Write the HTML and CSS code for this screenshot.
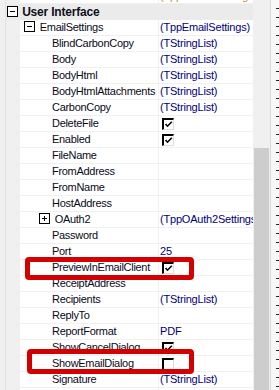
FILE: index.html
```html
<!DOCTYPE html>
<html>
<head>
    <meta charset="utf-8" />
    <title>Object Inspector</title>
    <link rel="stylesheet" href="styles.css">
</head>
<body class="body">
    <div class="inspector">
        <div class="side"></div>
        <div class="list">
            <div class="row top">
                <div class="indent"></div>
                <div class="name"></div>
                <div class="value"><span class="cut">(TppOutlineSettings)</span></div>
            </div>
            <div class="category">
                <svg class="tog" width="11" height="11" viewBox="0 0 11 11"><rect x="0.5" y="0.5" width="10" height="10" fill="#fff" stroke="#000"/><path d="M3 5.5h5" stroke="#000"/></svg>
                User Interface
            </div>
            <div class="row">
                <div class="indent"></div>
                <div class="name lvl1">
                    <svg class="tog" width="11" height="11" viewBox="0 0 11 11"><rect x="0.5" y="0.5" width="10" height="10" fill="#fff" stroke="#000"/><path d="M3 5.5h5" stroke="#000"/></svg>
                    EmailSettings
                </div>
                <div class="value">(TppEmailSettings)</div>
            </div>
            <div class="row"><div class="indent"></div><div class="name">BlindCarbonCopy</div><div class="value">(TStringList)</div></div>
            <div class="row"><div class="indent"></div><div class="name">Body</div><div class="value">(TStringList)</div></div>
            <div class="row"><div class="indent"></div><div class="name">BodyHtml</div><div class="value">(TStringList)</div></div>
            <div class="row"><div class="indent"></div><div class="name">BodyHtmlAttachments</div><div class="value">(TStringList)</div></div>
            <div class="row"><div class="indent"></div><div class="name">CarbonCopy</div><div class="value">(TStringList)</div></div>
            <div class="row"><div class="indent"></div><div class="name">DeleteFile</div><div class="value"><span class="check on"></span></div></div>
            <div class="row"><div class="indent"></div><div class="name">Enabled</div><div class="value"><span class="check on"></span></div></div>
            <div class="row"><div class="indent"></div><div class="name">FileName</div><div class="value"></div></div>
            <div class="row"><div class="indent"></div><div class="name">FromAddress</div><div class="value"></div></div>
            <div class="row"><div class="indent"></div><div class="name">FromName</div><div class="value"></div></div>
            <div class="row"><div class="indent"></div><div class="name">HostAddress</div><div class="value"></div></div>
            <div class="row">
                <div class="indent"></div>
                <div class="name lvl2">
                    <svg class="tog" width="11" height="11" viewBox="0 0 11 11"><rect x="0.5" y="0.5" width="10" height="10" fill="#fff" stroke="#000"/><path d="M3 5.5h5M5.5 3v5" stroke="#000"/></svg>
                    OAuth2
                </div>
                <div class="value">(TppOAuth2Settings)</div>
            </div>
            <div class="row"><div class="indent"></div><div class="name">Password</div><div class="value"></div></div>
            <div class="row"><div class="indent"></div><div class="name">Port</div><div class="value">25</div></div>
            <div class="row"><div class="indent"></div><div class="name">PreviewInEmailClient</div><div class="value"><span class="check on"></span></div></div>
            <div class="row"><div class="indent"></div><div class="name">ReceiptAddress</div><div class="value"></div></div>
            <div class="row"><div class="indent"></div><div class="name">Recipients</div><div class="value">(TStringList)</div></div>
            <div class="row"><div class="indent"></div><div class="name">ReplyTo</div><div class="value"></div></div>
            <div class="row"><div class="indent"></div><div class="name">ReportFormat</div><div class="value">PDF</div></div>
            <div class="row"><div class="indent"></div><div class="name">ShowCancelDialog</div><div class="value"><span class="check on"></span></div></div>
            <div class="row"><div class="indent"></div><div class="name">ShowEmailDialog</div><div class="value"><span class="check"></span></div></div>
            <div class="row"><div class="indent"></div><div class="name">Signature</div><div class="value">(TStringList)</div></div>
            <div class="row"><div class="indent"></div><div class="name"></div><div class="value"></div></div>

            <div class="mark mark1"></div>
            <div class="mark mark2"></div>
        </div>
        <div class="scroll"><div class="thumb"></div></div>
        <div class="ruler"></div>
    </div>
</body>
</html>
```

FILE: styles.css
```css
.body {
    margin: 0;
    background-color: #fff;
    font-family: "Liberation Sans", Arial, sans-serif;
    font-size: 11px;
}
.inspector {
    display: flex;
    width: 279px;
    height: 390px;
    overflow: hidden;
}
.side {
    width: 5px;
    flex: none;
    background-color: #f0f0f0;
    border-right: 1px solid #e3e3e3;
}
.list {
    position: relative;
    width: 247px;
    flex: none;
}
.row {
    display: flex;
    height: 16px;
}
.indent {
    width: 14px;
    flex: none;
    background-color: #f0f0f0;
}
.name {
    width: 139px;
    flex: none;
    box-sizing: border-box;
    height: 16px;
    padding-left: 32px;
    line-height: 15px;
    letter-spacing: -0.3px;
    color: #0a0a20;
    white-space: nowrap;
    overflow: hidden;
    border-bottom: 1px solid #f0f0f0;
    border-right: 1px solid #f0f0f0;
}
.value {
    flex: 1;
    box-sizing: border-box;
    height: 16px;
    padding-left: 1px;
    line-height: 15px;
    letter-spacing: -0.2px;
    color: #000080;
    white-space: nowrap;
    overflow: hidden;
    border-bottom: 1px solid #f0f0f0;
}
.lvl1 {
    padding-left: 4px;
}
.lvl2 {
    padding-left: 19px;
}
.tog {
    vertical-align: -1px;
    margin-right: 2px;
}
.top {
    height: 4px;
}
.top .name,
.top .value {
    height: 4px;
}
.cut {
    display: block;
    margin-top: -11px;
    color: #c08a40;
}
.category {
    height: 16px;
    box-sizing: border-box;
    padding-left: 1px;
    line-height: 16px;
    background-color: #ebebeb;
    font-weight: bold;
    font-size: 12px;
    letter-spacing: -0.2px;
    color: #101020;
    white-space: nowrap;
}
.category .tog {
    vertical-align: -1px;
    margin-right: 1px;
}
.check {
    display: inline-block;
    width: 9px;
    height: 9px;
    margin-top: 2px;
    margin-left: 2px;
    vertical-align: top;
    border-top: 2px solid #000;
    border-left: 2px solid #000;
    border-right: 1px solid #dcdcdc;
    border-bottom: 1px solid #dcdcdc;
    background-color: #fff;
}
.check.on {
    background-image: url("data:image/svg+xml,%3Csvg xmlns='http://www.w3.org/2000/svg' width='9' height='9'%3E%3Cpath d='M1.5 4l2 2.2L7.8 1.8' fill='none' stroke='%23000' stroke-width='1.6'/%3E%3C/svg%3E");
}
.mark {
    position: absolute;
    border: 5px solid #d40000;
    border-radius: 4px;
    box-sizing: border-box;
}
.mark1 {
    left: 19px;
    top: 257px;
    width: 169px;
    height: 23px;
}
.mark2 {
    left: 21px;
    top: 349px;
    width: 167px;
    height: 25px;
}
.scroll {
    width: 17px;
    flex: none;
    background-color: #f0f0f0;
    position: relative;
}
.thumb {
    margin-top: 148px;
    margin-left: 1px;
    width: 15px;
    height: 260px;
    background-color: #cdcdcd;
}
.ruler {
    width: 8px;
    flex: none;
    background-color: #f7f7f7;
    border-left: 1px solid #dadada;
    background-image: repeating-linear-gradient(to bottom, transparent 0, transparent 8px, #222 8px, #222 9px);
    background-size: 3px 390px;
    background-position: right top;
    background-repeat: no-repeat;
}
```
